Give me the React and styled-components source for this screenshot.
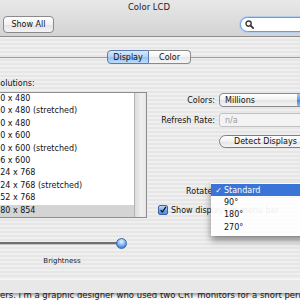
import styled, { createGlobalStyle } from "styled-components";

const GlobalStyle = createGlobalStyle`
  html, body {
    margin: 0;
    padding: 0;
  }
  body {
    width: 300px;
    height: 300px;
    overflow: hidden;
    background: #fff;
    font-family: "DejaVu Sans", sans-serif;
    color: #111;
  }
`;

const resolutions = [
  "640 x 480",
  "640 x 480 (stretched)",
  "720 x 480",
  "800 x 600",
  "800 x 600 (stretched)",
  "896 x 600",
  "1024 x 768",
  "1024 x 768 (stretched)",
  "1152 x 768",
  "1280 x 854",
];

const rotations = ["Standard", "90°", "180°", "270°"];

const SearchIcon = () => (
  <svg width="9" height="9" viewBox="0 0 9 9">
    <circle cx="3.6" cy="3.6" r="2.6" fill="none" stroke="#3a3a3a" strokeWidth="1.4" />
    <line x1="5.5" y1="5.5" x2="8.2" y2="8.2" stroke="#3a3a3a" strokeWidth="1.8" strokeLinecap="round" />
  </svg>
);

const CheckIcon = () => (
  <svg width="10" height="10" viewBox="0 0 10 10">
    <path d="M2 5.2 L4.2 7.6 L8.6 1.2" fill="none" stroke="#111" strokeWidth="1.6" />
  </svg>
);

const App = () => {
  return (
    <Frame>
      <GlobalStyle />
      <Window>
        <TitleBar>
          <Title>Color LCD</Title>
          <Toolbar>
            <ShowAll>Show All</ShowAll>
            <SearchField>
              <SearchIcon />
            </SearchField>
          </Toolbar>
        </TitleBar>

        <Pane>
          <TabBar>
            <TabLine />
            <Tab selected>Display</Tab>
            <Tab>Color</Tab>
            <TabLine />
          </TabBar>

          <Body>
            <LeftColumn>
              <ListLabel>Resolutions:</ListLabel>
              <ListBox>
                <Rows>
                  {resolutions.map((r, i) => (
                    <ListRow key={r} selected={i === resolutions.length - 1}>
                      {r}
                    </ListRow>
                  ))}
                </Rows>
                <ScrollTrack />
              </ListBox>

              <SliderBlock>
                <SliderTrack>
                  <Groove />
                  <Knob />
                </SliderTrack>
                <SliderLabel>Brightness</SliderLabel>
              </SliderBlock>
            </LeftColumn>

            <RightColumn>
              <FormRow top={29}>
                <Label>Colors:</Label>
                <PopUp>
                  <span>Millions</span>
                  <PopArrows />
                </PopUp>
              </FormRow>
              <FormRow top={6}>
                <Label>Refresh Rate:</Label>
                <Field>n/a</Field>
              </FormRow>
              <FormRow top={8}>
                <span />
                <PillButton>Detect Displays</PillButton>
              </FormRow>
              <FormRow top={36}>
                <Label>Rotate:</Label>
                <MenuAnchor>
                  <PopUp>
                    <span>Standard</span>
                    <PopArrows />
                  </PopUp>
                  <Menu>
                    {rotations.map((r, i) => (
                      <MenuItem key={r} active={i === 0}>
                        <Mark>{i === 0 ? "✓" : ""}</Mark>
                        {r}
                      </MenuItem>
                    ))}
                  </Menu>
                </MenuAnchor>
              </FormRow>
              <CheckRow>
                <CheckBox>
                  <CheckIcon />
                </CheckBox>
                Show displays in menu bar
              </CheckRow>
            </RightColumn>
          </Body>
        </Pane>
        <BottomBar />
      </Window>
      <PageText>
        <span>ers. I'm a graphic designer who used two CRT monitors for a short period</span>
      </PageText>
    </Frame>
  );
};

const Frame = styled.div`
  width: 300px;
  height: 300px;
  overflow: hidden;
  display: flex;
  flex-direction: column;
`;

const Window = styled.div`
  position: relative;
  z-index: 1;
  margin-left: -24px;
  width: 346px;
  flex-shrink: 0;
  display: flex;
  flex-direction: column;
  box-shadow: 0 2px 4px rgba(0, 0, 0, 0.45);
`;

const TitleBar = styled.div`
  height: 36px;
  border-bottom: 1px solid #8e8e8e;
  background: linear-gradient(#e8e8e8, #d3d3d3);
  display: flex;
  flex-direction: column;
`;

const Title = styled.div`
  height: 14px;
  line-height: 14px;
  text-align: center;
  font-size: 8.5px;
  color: #222;
`;

const Toolbar = styled.div`
  height: 20px;
  display: flex;
  align-items: center;
  justify-content: space-between;
  padding: 0 8px 0 27px;
`;

const ShowAll = styled.div`
  width: 51px;
  height: 17px;
  box-sizing: border-box;
  border: 1px solid #8a8a8a;
  border-radius: 4px;
  background: linear-gradient(#ffffff, #f1f1f1 50%, #e2e2e2 51%, #f4f4f4);
  display: flex;
  align-items: center;
  justify-content: center;
  font-size: 8px;
  color: #111;
`;

const SearchField = styled.div`
  width: 74px;
  height: 15px;
  box-sizing: border-box;
  border: 1px solid #6f9bd3;
  border-radius: 8px;
  box-shadow: 0 0 0 1px #b3cdef;
  background: #fff;
  display: flex;
  align-items: center;
  padding-left: 4px;
`;

const Pane = styled.div`
  height: 242px;
  background: repeating-linear-gradient(180deg, #efefef 0 2px, #e6e6e6 2px 4px);
  display: flex;
  flex-direction: column;
`;

const TabBar = styled.div`
  margin-top: 13px;
  height: 14px;
  display: flex;
  align-items: center;
`;

const TabLine = styled.div`
  flex: 1;
  height: 1px;
  background: #9c9c9c;
`;

const Tab = styled.div`
  width: 42px;
  height: 14px;
  box-sizing: border-box;
  display: flex;
  align-items: center;
  justify-content: center;
  font-size: 8px;
  color: #111;
  border: 1px solid ${(p) => (p.selected ? "#5a7cad" : "#8a8a8a")};
  border-radius: ${(p) => (p.selected ? "4px 0 0 4px" : "0 4px 4px 0")};
  border-left-width: ${(p) => (p.selected ? "1px" : "0")};
  background: ${(p) =>
    p.selected
      ? "linear-gradient(#d9e8fa, #b4d2f4 50%, #94c0f1 51%, #c0dcfa)"
      : "linear-gradient(#ffffff, #f3f3f3 50%, #e6e6e6 51%, #f6f6f6)"};
`;

const Body = styled.div`
  display: grid;
  grid-template-columns: 170px 1fr;
`;

const LeftColumn = styled.div`
  padding-left: 9px;
  display: flex;
  flex-direction: column;
`;

const ListLabel = styled.div`
  margin: 15px 0 0 1px;
  height: 10px;
  line-height: 10px;
  font-size: 8px;
`;

const ListBox = styled.div`
  margin-top: 3px;
  width: 162px;
  height: 126px;
  box-sizing: border-box;
  border: 1px solid #8c8c8c;
  background: #fff;
  display: flex;
`;

const Rows = styled.div`
  flex: 1;
  display: flex;
  flex-direction: column;
`;

const ListRow = styled.div`
  height: 12.4px;
  line-height: 12.4px;
  padding-left: 4px;
  font-size: 8px;
  white-space: nowrap;
  background: ${(p) => (p.selected ? "#d4d4d4" : "transparent")};
`;

const ScrollTrack = styled.div`
  width: 11px;
  border-left: 1px solid #b4b4b4;
  background: linear-gradient(90deg, #dcdcdc, #f0f0f0 60%, #e6e6e6);
`;

const SliderBlock = styled.div`
  margin: 20px 0 0 12px;
  width: 130px;
  display: flex;
  flex-direction: column;
`;

const SliderTrack = styled.div`
  height: 11px;
  display: flex;
  align-items: center;
`;

const Groove = styled.div`
  flex: 1;
  height: 2px;
  margin-right: -5px;
  background: #6e6e6e;
  border-bottom: 1px solid #c4c4c4;
`;

const Knob = styled.div`
  position: relative;
  width: 11px;
  height: 11px;
  box-sizing: border-box;
  border-radius: 50%;
  border: 1px solid #3d68a6;
  background: radial-gradient(circle at 50% 30%, #eef6ff 0, #9cc8f6 35%, #3f8ae3 75%, #5aa2ef 100%);
`;

const SliderLabel = styled.div`
  margin-top: 8px;
  height: 8px;
  line-height: 8px;
  text-align: center;
  font-size: 7px;
  color: #222;
`;

const RightColumn = styled.div`
  display: flex;
  flex-direction: column;
`;

const FormRow = styled.div`
  margin-top: ${(p) => p.top}px;
  display: grid;
  grid-template-columns: 69px 1fr;
  column-gap: 4px;
  align-items: center;
`;

const Label = styled.div`
  text-align: right;
  font-size: 8px;
  white-space: nowrap;
`;

const PopUp = styled.div`
  width: 97px;
  height: 14px;
  box-sizing: border-box;
  border: 1px solid #8a8a8a;
  border-radius: 4px;
  background: linear-gradient(#ffffff, #f2f2f2 50%, #e4e4e4 51%, #f5f5f5);
  display: flex;
  align-items: center;
  padding-left: 5px;
  font-size: 8px;
  overflow: hidden;

  span {
    flex: 1;
  }
`;

const PopArrows = styled.div`
  width: 18px;
  height: 100%;
  background: linear-gradient(#a9cdf5, #5b9ded 50%, #3c86e4 51%, #8ec0f5);
`;

const Field = styled.div`
  width: 97px;
  height: 14px;
  box-sizing: border-box;
  border: 1px solid #c2c2c2;
  border-radius: 3px;
  background: #f3f3f3;
  display: flex;
  align-items: center;
  padding-left: 5px;
  font-size: 8px;
  color: #9a9a9a;
`;

const PillButton = styled.div`
  width: 93px;
  height: 13px;
  box-sizing: border-box;
  border: 1px solid #7f7f7f;
  border-radius: 7px;
  background: linear-gradient(#ffffff, #f2f2f2 50%, #e3e3e3 51%, #f6f6f6);
  display: flex;
  align-items: center;
  padding-left: 14px;
  font-size: 8px;
  white-space: nowrap;
`;

const MenuAnchor = styled.div`
  position: relative;
`;

const Menu = styled.div`
  position: absolute;
  z-index: 2;
  top: -1px;
  left: -8px;
  width: 110px;
  padding: 1px 0 3px;
  background: rgba(255, 255, 255, 0.92);
  box-shadow: 0 4px 7px rgba(0, 0, 0, 0.45);
`;

const MenuItem = styled.div`
  height: 12.3px;
  display: flex;
  align-items: center;
  font-size: 8px;
  color: ${(p) => (p.active ? "#fff" : "#111")};
  background: ${(p) => (p.active ? "#3a74d6" : "transparent")};
`;

const Mark = styled.span`
  width: 13px;
  text-align: right;
  padding-right: 2px;
  box-sizing: border-box;
`;

const CheckRow = styled.div`
  margin-top: 7px;
  padding-left: 12px;
  display: flex;
  align-items: center;
  gap: 3px;
  font-size: 8px;
  white-space: nowrap;
`;

const CheckBox = styled.div`
  width: 10px;
  height: 10px;
  box-sizing: border-box;
  border: 1px solid #3c62a0;
  border-radius: 2px;
  background: linear-gradient(#bcd8f8, #6aa6ee 55%, #4a8fe8);
  display: flex;
  align-items: center;
  justify-content: center;
`;

const BottomBar = styled.div`
  height: 13px;
  border-top: 1px solid #f7f7f7;
  background: #e8e8e8;
`;

const PageText = styled.div`
  height: 8px;
  overflow: hidden;
  display: flex;
  align-items: flex-end;
  white-space: nowrap;
  font-size: 8.5px;
  line-height: 10px;
  color: #222;
`;

export default App;
